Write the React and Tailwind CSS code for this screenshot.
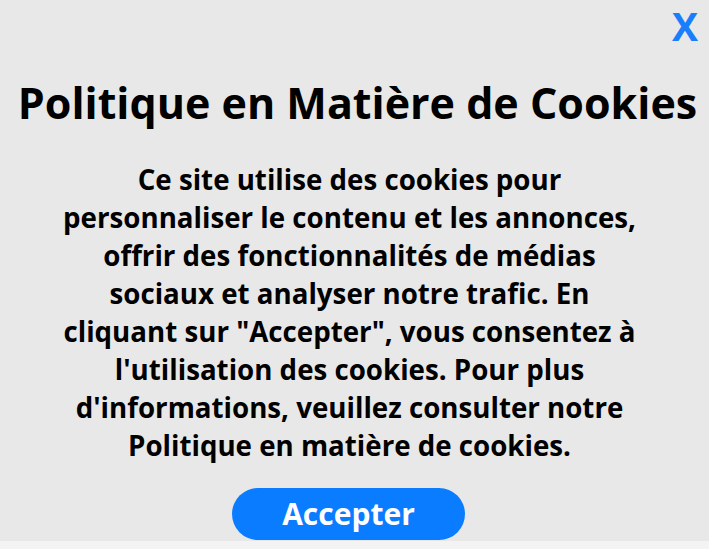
export default function App() {
  const lines = [
    "Ce site utilise des cookies pour",
    "personnaliser le contenu et les annonces,",
    "offrir des fonctionnalités de médias",
    "sociaux et analyser notre trafic. En",
    'cliquant sur "Accepter", vous consentez à',
    "l'utilisation des cookies. Pour plus",
    "d'informations, veuillez consulter notre",
    "Politique en matière de cookies.",
  ];
  return (
    <div className="w-[709px] h-[549px] bg-[#e8e8e8] flex flex-col overflow-hidden" style={{ fontFamily: '"Open Sans", sans-serif' }}>
      <div className="flex justify-end pr-[11px] pt-[6px] h-[44px]">
        <span className="text-[#1a7efb] text-[39px] font-bold leading-[40px]">X</span>
      </div>
      <h1 className="mt-[35px] pl-[6px] text-center text-black text-[43px] font-bold leading-[48px] whitespace-nowrap">
        Politique en Matière de Cookies
      </h1>
      <div className="mt-[33px] pr-[10px] flex flex-col items-center text-black text-[27.7px] font-bold leading-[38px]">
        {lines.map((l, i) => (
          <div key={i} className="whitespace-nowrap">{l}</div>
        ))}
      </div>
      <div className="mt-[24px] pr-[12px] flex justify-center">
        <button className="w-[233px] h-[52px] rounded-full bg-[#0a7cff] text-white text-[30px] font-bold leading-[52px]">
          Accepter
        </button>
      </div>
      <div className="mt-auto h-[8px] bg-[#f3f3f3]" />
    </div>
  );
}
